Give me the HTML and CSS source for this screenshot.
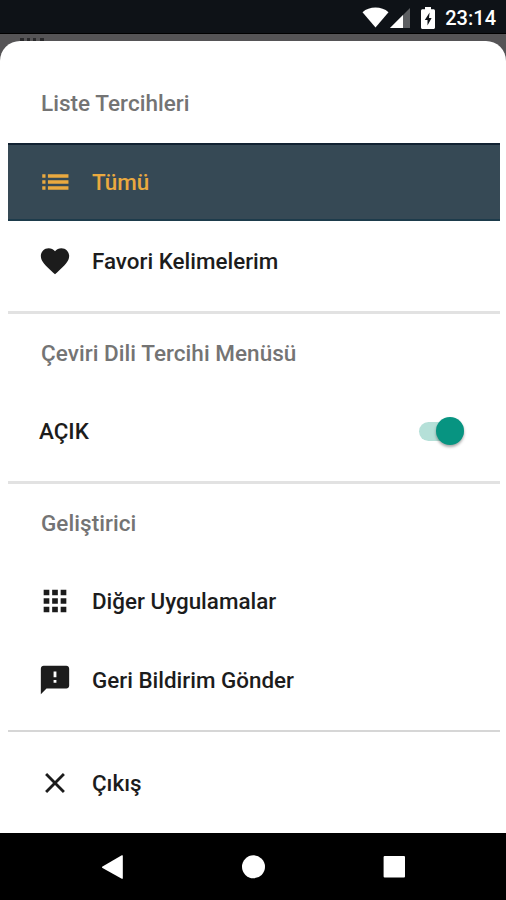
FILE: index.html
```html
<!DOCTYPE html>
<html lang="tr">
<head>
  <meta charset="UTF-8" />
  <meta name="viewport" content="width=device-width, initial-scale=1.0" />
  <title>Liste Tercihleri</title>
  <link rel="stylesheet" href="styles.css">
</head>
<body>
  <header class="status-bar">
    <svg class="wifi" viewBox="0 0 27 21"><path d="M13.5 20.5 .5 5.2C4 2 8.500 .5 13.500 .5S23 2 26.500 5.200z"/></svg>
    <svg class="signal" viewBox="0 0 20 20"><path class="dim" d="M20 0v20H0z"/><path d="M13 7v13H0z"/></svg>
    <svg class="battery" viewBox="0 0 14 22"><path d="M4 0h6v2.200h2.500c.8 0 1.500.7 1.500 1.500v16.800c0 .8-.7 1.500-1.500 1.500h-11C.7 22 0 21.300 0 20.500V3.700c0-.8.7-1.500 1.500-1.500H4z"/><path class="bolt" d="M8.600 5.500 3.800 13h2.700v5.500L10.600 11H8z"/></svg>
    <span class="clock">23:14</span>
  </header>

  <main class="backdrop">
    <div class="behind"></div>
    <div class="sheet">
      <section class="group">
        <h2>Liste Tercihleri</h2>
        <a class="item selected">
          <svg class="icon" viewBox="0 0 24 24"><path d="M3 13.200h2.300v-2.400H3zm0 4.200h2.300V15H3zM3 9h2.300V6.600H3zm4 4.200h14.500v-2.400H7zm0 4.200h14.500V15H7zM7 6.600V9h14.500V6.600z"/></svg>
          <span>Tümü</span>
        </a>
        <a class="item tall">
          <svg class="icon" viewBox="0 0 24 24"><path d="M12 21.350l-1.450-1.320C5.400 15.360 2 12.280 2 8.500 2 5.420 4.420 3 7.500 3c1.740 0 3.410.81 4.500 2.090C13.090 3.810 14.760 3 16.500 3 19.580 3 22 5.420 22 8.500c0 3.780-3.400 6.860-8.550 11.540L12 21.350z"/></svg>
          <span>Favori Kelimelerim</span>
        </a>
      </section>

      <section class="group">
        <h2>Çeviri Dili Tercihi Menüsü</h2>
        <div class="item toggle">
          <span>AÇIK</span>
          <div class="switch"><div class="thumb"></div></div>
        </div>
      </section>

      <section class="group developer">
        <h2>Geliştirici</h2>
        <a class="item">
          <svg class="icon" viewBox="0 0 24 24"><path d="M4 8h4V4H4v4zm6 12h4v-4h-4v4zm-6 0h4v-4H4v4zm0-6h4v-4H4v4zm6 0h4v-4h-4v4zm6-10v4h4V4h-4zm-6 4h4V4h-4v4zm6 6h4v-4h-4v4zm0 6h4v-4h-4v4z"/></svg>
          <span>Diğer Uygulamalar</span>
        </a>
        <a class="item tall">
          <svg class="icon" viewBox="0 0 24 24"><path d="M20 2H4c-1.100 0-1.990.9-1.990 2L2 22l4-4h14c1.100 0 2-.9 2-2V4c0-1.100-.9-2-2-2zm-7 12h-2v-2h2v2zm0-4h-2V6h2v4z"/></svg>
          <span>Geri Bildirim Gönder</span>
        </a>
      </section>

      <section class="group last">
        <a class="item">
          <svg class="icon" viewBox="0 0 24 24"><path d="M19 6.410L17.590 5 12 10.590 6.410 5 5 6.410 10.590 12 5 17.590 6.410 19 12 13.410 17.590 19 19 17.590 13.410 12z"/></svg>
          <span>Çıkış</span>
        </a>
      </section>
    </div>
  </main>

  <nav class="nav-bar">
    <svg viewBox="0 0 24 24"><path d="M22.800 .8v22.400q0 1-1 .5L2.500 13q-1-.8 0-1.500L21.800 .3q1-.5 1 .5z"/></svg>
    <svg viewBox="0 0 24 24"><circle cx="12.500" cy="11.800" r="11.500"/></svg>
    <svg viewBox="0 0 24 24"><rect x="1.600" y="1" width="21.400" height="21.400" rx="1"/></svg>
  </nav>
</body>
</html>
```

FILE: styles.css
```css
:root {
  --ink: #1c1c1c;
  --muted: #747474;
  --selected: #364955;
  --accent: #eaa93f;
  --teal: #079481;
}
* { box-sizing: border-box; }
body {
  margin: 0;
  height: 900px;
  display: flex;
  flex-direction: column;
  overflow: hidden;
  background: #000;
  color: var(--ink);
  font-family: Roboto, sans-serif;
  font-size: 22.4px;
  font-weight: 500;
}
svg { display: block; fill: currentColor; }

.status-bar {
  height: 34px;
  display: flex;
  align-items: center;
  justify-content: flex-end;
  padding: 2px 10px 0 0;
  background: #0e1217;
  border-bottom: 1px solid #000;
  color: #fff;
}
.wifi { width: 27px; height: 21px; }
.signal { width: 20px; height: 20px; margin-left: 1px; }
.signal .dim { fill: #5d5f62; }
.battery { width: 14px; height: 22px; margin-left: 11px; }
.battery .bolt { fill: #0e1217; }
.clock {
  margin-left: 10px;
  font-size: 20px;
  line-height: 34px;
}

.backdrop {
  display: flow-root;
  height: 799px;
  background: #555456;
}
/* top edge of the list page showing above the sheet */
.behind {
  width: 24px;
  height: 3px;
  margin: 4px 0 0 20px;
  border-top: 3px dotted #29292b;
}
.sheet {
  height: 792px;
  padding: 23px 6px 0 8px;
  background: #fff;
  border-radius: 20px 20px 0 0;
}
.group {
  padding-bottom: 10px;
  border-bottom: 3px solid #e2e2e2;
}
.group + .group { padding-bottom: 11px; }
.group.developer {
  padding-bottom: 10px;
  border-bottom: 2px solid #d6d6d6;
}
.group.last { padding-top: 12px; border: none; }
h2 {
  margin: 0;
  padding-left: 33px;
  color: var(--muted);
  font-size: 22.5px;
  font-weight: 500;
  letter-spacing: 0.04px;
  line-height: 79px;
}
.group + .group h2 { padding-top: 1px; line-height: 77px; }
.item {
  height: 78px;
  display: flex;
  align-items: center;
  padding-left: 30px;
}
.item.tall { height: 80px; }
.icon { width: 34px; height: 34px; margin-right: 20px; }
.selected {
  background: var(--selected);
  border-top: 2px solid #122232;
  border-bottom: 2px solid #1d3b4b;
  color: var(--accent);
}
.item.toggle {
  justify-content: space-between;
  padding: 0 36px 0 31px;
}
.switch {
  width: 45px;
  height: 19px;
  display: flex;
  align-items: center;
  justify-content: flex-end;
  border-radius: 10px;
  background: #b5e0d8;
}
.thumb {
  width: 28px;
  height: 28px;
  border-radius: 50%;
  background: var(--teal);
  box-shadow: 0 2px 3px rgba(0,0,0,0.35);
}

.nav-bar {
  height: 67px;
  display: flex;
  justify-content: center;
  align-items: center;
  gap: 117px;
  color: #fff;
}
.nav-bar svg { width: 24px; height: 24px; }
```
